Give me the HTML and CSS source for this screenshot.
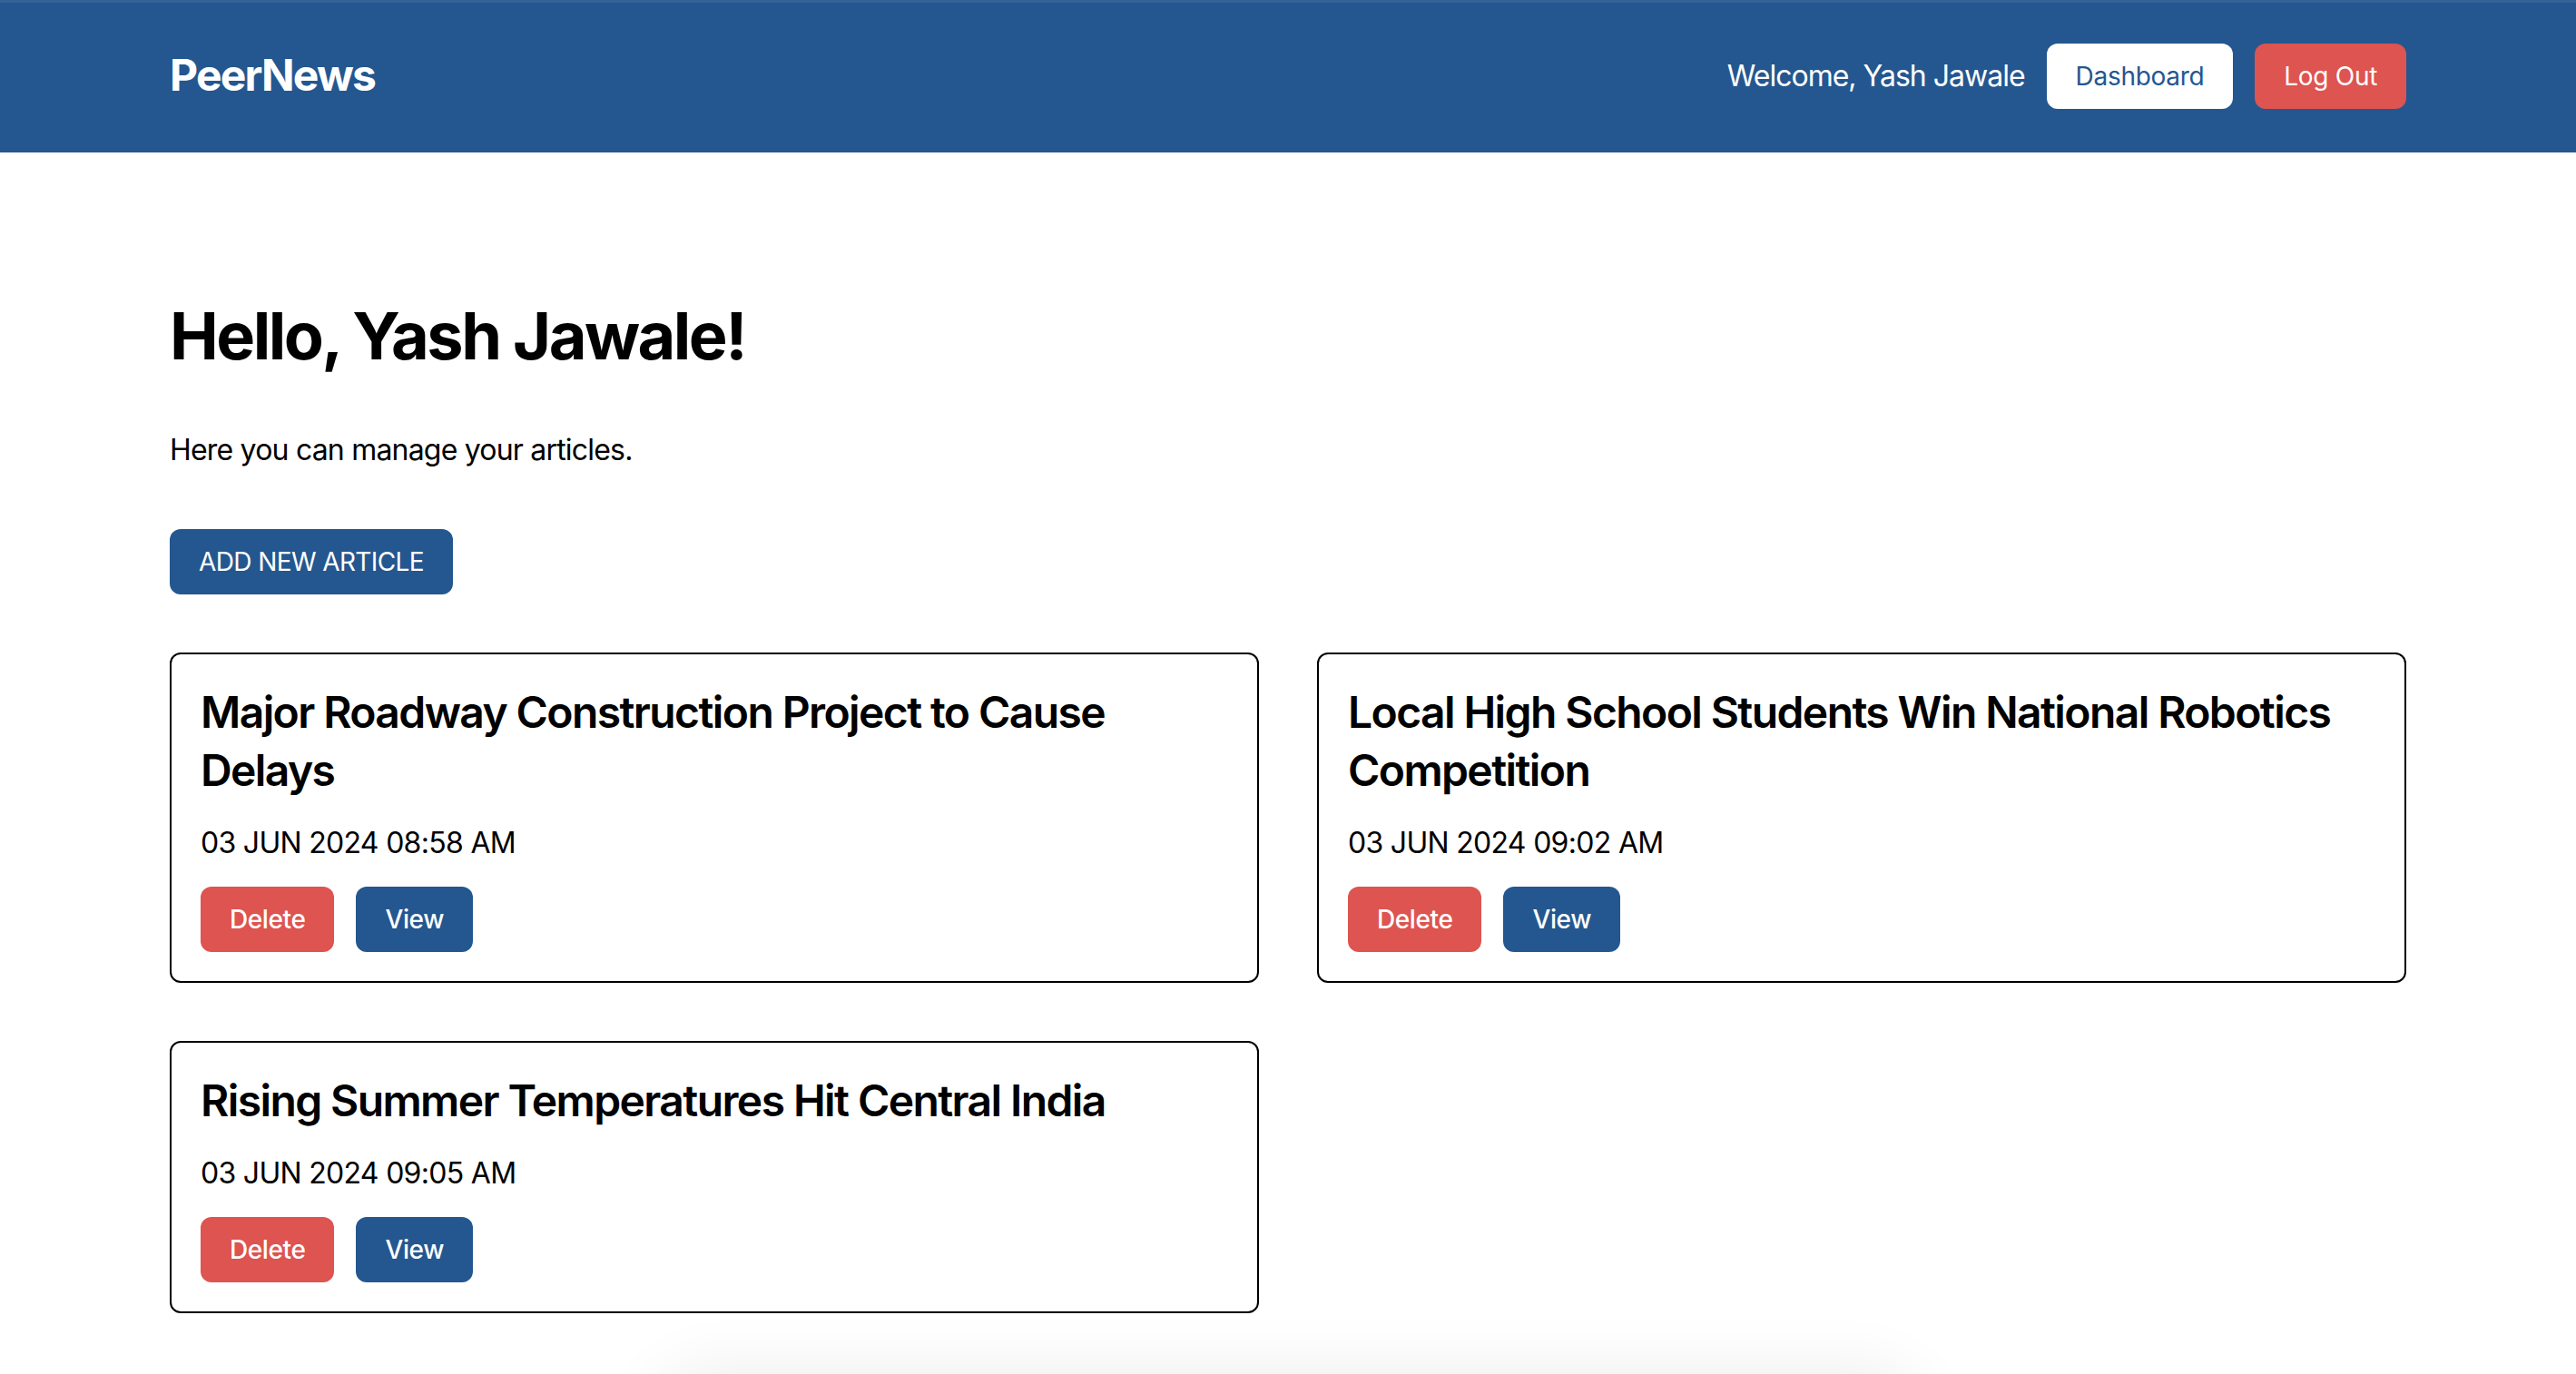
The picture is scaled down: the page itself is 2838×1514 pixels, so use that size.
FILE: index.html
```html
<!DOCTYPE html>
<html lang="en">
<head>
<meta charset="utf-8">
<title>PeerNews - Dashboard</title>
<link rel="stylesheet" href="styles.css">
</head>
<body>
<header class="topbar">
  <div class="container topbar-inner">
    <div class="logo">PeerNews</div>
    <nav class="nav">
      <span class="welcome">Welcome, Yash Jawale</span>
      <a class="btn btn-white" href="#">Dashboard</a>
      <a class="btn btn-red" href="#">Log Out</a>
    </nav>
  </div>
</header>
<main class="container main">
  <h1 class="hello">Hello, Yash Jawale!</h1>
  <p class="intro">Here you can manage your articles.</p>
  <a class="btn btn-blue btn-add" href="#">ADD NEW ARTICLE</a>
  <section class="grid">
    <article class="card">
      <h2 class="card-title">Major Roadway Construction Project to Cause Delays</h2>
      <p class="card-date">03 JUN 2024 08:58 AM</p>
      <div class="card-actions">
        <a class="btn btn-red btn-card" href="#">Delete</a>
        <a class="btn btn-blue btn-card" href="#">View</a>
      </div>
    </article>
    <article class="card">
      <h2 class="card-title">Local High School Students Win National Robotics Competition</h2>
      <p class="card-date">03 JUN 2024 09:02 AM</p>
      <div class="card-actions">
        <a class="btn btn-red btn-card" href="#">Delete</a>
        <a class="btn btn-blue btn-card" href="#">View</a>
      </div>
    </article>
    <article class="card">
      <h2 class="card-title">Rising Summer Temperatures Hit Central India</h2>
      <p class="card-date">03 JUN 2024 09:05 AM</p>
      <div class="card-actions">
        <a class="btn btn-red btn-card" href="#">Delete</a>
        <a class="btn btn-blue btn-card" href="#">View</a>
      </div>
    </article>
  </section>
</main>
<div class="footer-shadow"></div>
</body>
</html>
```

FILE: styles.css
```css
* { box-sizing: border-box; }
html, body {
  margin: 0;
  padding: 0;
  background: #ffffff;
}
body {
  font-family: Inter, "Noto Sans", "Liberation Sans", sans-serif;
  color: #000;
  overflow: hidden;
}
.container {
  max-width: 2560px;
  margin: 0 auto;
  padding: 0 48px;
}
.topbar {
  background: #24578f;
  box-shadow: inset 0 3px 0 rgba(255,255,255,0.07);
  padding: 48px 0;
}
.topbar-inner {
  display: flex;
  align-items: center;
  justify-content: space-between;
  height: 72px;
}
.logo {
  color: #fff;
  font-size: 48px;
  line-height: 64px;
  font-weight: 700;
  letter-spacing: -1.8px;
  margin-top: -2px;
}
.nav {
  display: flex;
  align-items: center;
  gap: 24px;
}
.welcome {
  color: #fff;
  font-size: 32px;
  line-height: 48px;
  letter-spacing: -1px;
}
.btn {
  display: inline-block;
  text-decoration: none;
  font-size: 28px;
  line-height: 40px;
  padding: 16px 32px;
  border-radius: 12px;
  white-space: nowrap;
  letter-spacing: -0.3px;
}
.btn-white { background: #fff; color: #24578f; }
.btn-red { background: #dd5450; color: #fff; }
.btn-blue { background: #24578f; color: #fff; }
.main {
  padding-top: 162px;
  padding-bottom: 74px;
}
.hello {
  margin: 0 0 62px;
  font-size: 72px;
  line-height: 80px;
  font-weight: 700;
  letter-spacing: -2.5px;
}
.intro {
  margin: 0 0 63px;
  font-size: 32px;
  line-height: 48px;
  letter-spacing: -0.8px;
}
.btn-add {
  margin-bottom: 64px;
  letter-spacing: -0.6px;
}
.grid {
  display: grid;
  grid-template-columns: 1fr 1fr;
  gap: 64px;
  align-items: start;
}
.card {
  border: 2px solid #000;
  border-radius: 12px;
  padding: 32px;
}
.card-title {
  margin: 0 0 24px;
  font-size: 48px;
  line-height: 64px;
  font-weight: 600;
  letter-spacing: -1.6px;
}
.card-date {
  margin: 0 0 24px;
  font-size: 32px;
  line-height: 48px;
  letter-spacing: -0.7px;
}
.card-actions {
  display: flex;
  gap: 24px;
}
.btn-card {
  font-weight: 500;
  letter-spacing: -0.4px;
}
.footer-shadow {
  width: 1400px;
  height: 200px;
  margin: 0 auto;
  border-radius: 60px;
  background: #fff;
  box-shadow: 0 -12px 70px rgba(0,0,0,0.07);
}
```
